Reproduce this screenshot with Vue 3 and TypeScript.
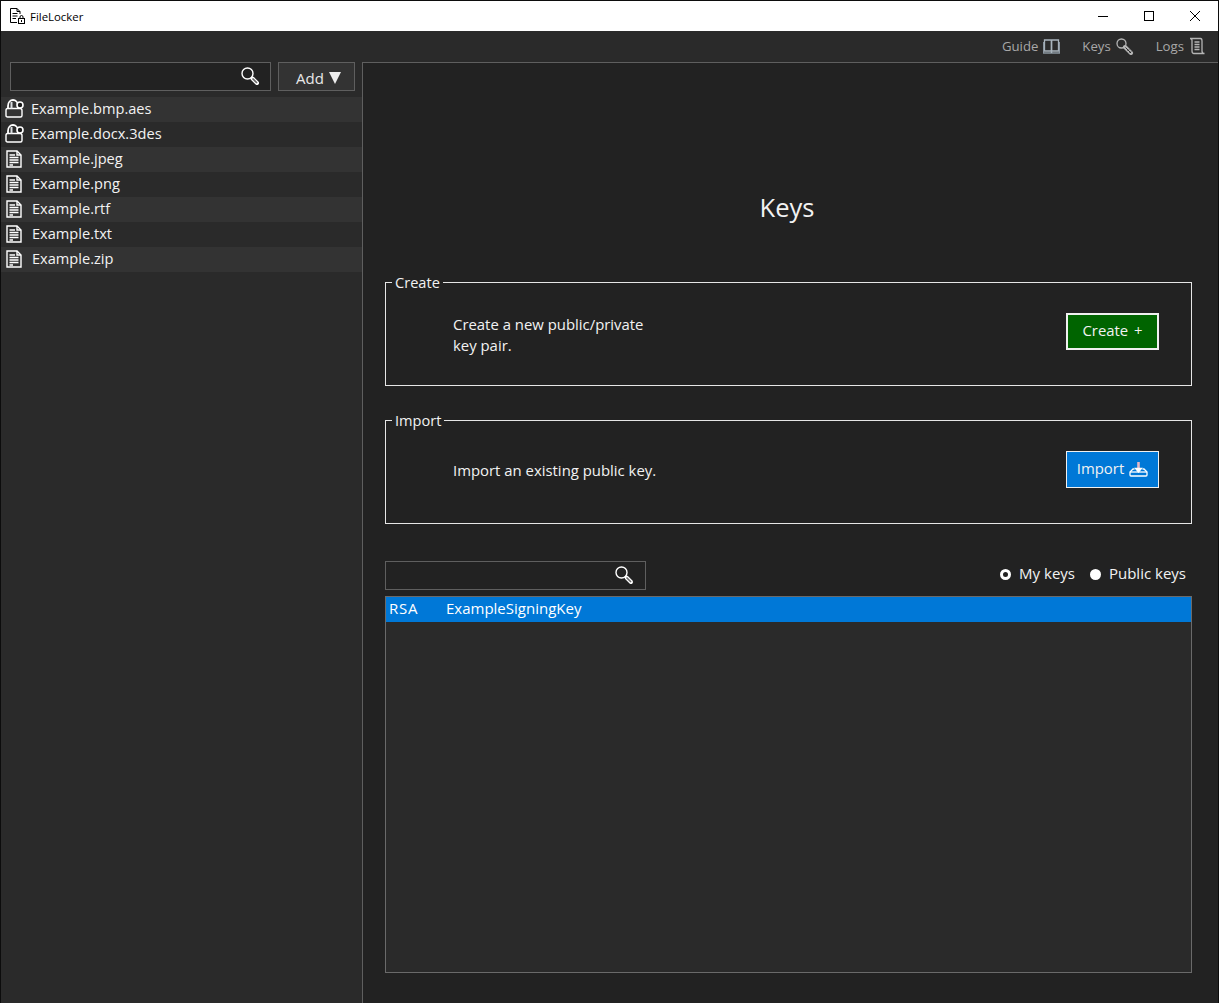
<script setup lang="ts">
interface FileRow { name: string; locked: boolean }
const files: FileRow[] = [
  { name: 'Example.bmp.aes', locked: true },
  { name: 'Example.docx.3des', locked: true },
  { name: 'Example.jpeg', locked: false },
  { name: 'Example.png', locked: false },
  { name: 'Example.rtf', locked: false },
  { name: 'Example.txt', locked: false },
  { name: 'Example.zip', locked: false },
]
</script>

<template>
  <div class="window">
    <header class="titlebar">
      <svg class="app-icon" width="15" height="16" viewBox="0 0 15 16" fill="none" stroke="#000" stroke-width="1">
        <path d="M7 14.5H.5V.5H7L10 3.5V6" />
        <path d="M7 .5V3.5H10M2.5 5.5H7.5M2.5 8H7.5M2.5 10.5H6" />
        <rect x="8.5" y="10.5" width="6" height="5" />
        <path d="M10 10.5V9a1.5 1.5 0 0 1 3 0V10.5" />
        <rect x="11" y="12" width="1" height="2" fill="#000" stroke="none" />
      </svg>
      <span class="app-name">FileLocker</span>
      <div class="controls">
        <span class="ctl"><svg width="12" height="12" viewBox="0 0 12 12"><path d="M1 6.5H11" stroke="#000" /></svg></span>
        <span class="ctl"><svg width="12" height="12" viewBox="0 0 12 12"><rect x="1.5" y="1.5" width="9" height="9" fill="none" stroke="#000" /></svg></span>
        <span class="ctl"><svg width="12" height="12" viewBox="0 0 12 12"><path d="M1 1L11 11M11 1L1 11" stroke="#000" /></svg></span>
      </div>
    </header>

    <nav class="topnav">
      <span class="nav-item">Guide
        <svg width="17" height="15" viewBox="0 0 17 15" fill="none" stroke="#a9b4bd" stroke-width="1.3">
          <path d="M1.5 1H8.5V12H1.5ZM8.5 1H15.5V12H8.5Z" />
          <path d="M.5 3V14H16.5V3" stroke="#8b96a0" />
          <path d="M8.5 1V14" stroke-width="1.5" />
        </svg>
      </span>
      <span class="nav-item">Keys
        <svg width="18" height="17" viewBox="0 0 18 17" fill="none" stroke="#b5b5b5" stroke-width="1.3">
          <circle cx="5.5" cy="5.5" r="4.5" />
          <path d="M9 9L15 15" stroke-width="4" stroke-linecap="round" />
          <path d="M9.5 9.5L15 15" stroke="#2a2a2a" stroke-width="1" />
          <path d="M11.5 13L13 11.5M13.5 15L15 13.5" stroke="#2a2a2a" stroke-width="1" />
        </svg>
      </span>
      <span class="nav-item">Logs
        <svg width="16" height="18" viewBox="0 0 16 18" fill="none" stroke="#b5b5b5" stroke-width="1.3">
          <path d="M1 1.5H11.5C13 1.5 13 3 13 4V14C13 15.5 14 16.5 15.5 16.5H5C3.5 16.5 3 15.5 3 14V3.5C3 2.5 2.5 1.5 1 1.5Z" />
          <path d="M5.5 5H10.5M5.5 7.5H10.5M5.5 10H10.5M5.5 12.5H10.5" stroke-width="1.5" />
        </svg>
      </span>
    </nav>

    <div class="body">
      <aside class="sidebar">
        <div class="side-tools">
          <div class="search side-search">
            <svg class="glass" width="20" height="20" viewBox="0 0 20 20" fill="none">
              <circle cx="7.5" cy="7.5" r="5.5" stroke="#fff" stroke-width="1.4" />
              <path d="M12.5 12.5L17 17" stroke="#fff" stroke-width="4" stroke-linecap="round" />
              <path d="M12.5 12.5L17 17" stroke="#666" stroke-width="1.6" />
            </svg>
          </div>
          <div class="add-btn"><span>Add</span><span class="tri"></span></div>
        </div>
        <ul class="files">
          <li v-for="f in files" :key="f.name" class="file" :class="{ 'is-locked': f.locked }">
            <svg v-if="f.locked" class="file-icon" width="19" height="19" viewBox="0 0 19 19" fill="none" stroke="#fff" stroke-width="1.4">
              <path d="M3 9.5V7C3 3 5.5 1 8 1S13 3 13 7V9.5" stroke-width="1.8" />
              <path d="M2.5 9.5H15C16 9.5 17 10.5 17 11.5V16.5C17 17.5 16.5 18 15.5 18H2.5C1.5 18 1 17.5 1 16.5V11.5C1 10.5 1.5 9.5 2.5 9.5Z" />
              <path d="M6.5 3V9.5" stroke="#d9dde0" stroke-width="2" />
              <circle cx="15" cy="6" r="3" fill="#1a1a1a" stroke-width="1.6" />
            </svg>
            <svg v-else class="file-icon" width="16" height="18" viewBox="0 0 16 18" fill="none" stroke="#fff" stroke-width="1.4">
              <path d="M1 1H11L15 5V17H1Z" />
              <path d="M11 1V5H15" />
              <path d="M3.5 5H9M3.5 7.5H12.5M3.5 10H12.5M3.5 12.5H12.5M3.5 15H7" stroke-width="1.7" />
            </svg>
            <span class="file-name">{{ f.name }}</span>
          </li>
        </ul>
      </aside>

      <main class="main">
        <h1 class="title">Keys</h1>

        <fieldset class="group">
          <legend>Create</legend>
          <div class="group-body">
            <p class="group-text two-line">Create a new public/private<br />key pair.</p>
            <div class="action create">Create +</div>
          </div>
        </fieldset>

        <fieldset class="group">
          <legend>Import</legend>
          <div class="group-body">
            <p class="group-text one-line">Import an existing public key.</p>
            <div class="action import">Import
              <svg width="19" height="16" viewBox="0 0 19 16" fill="none" stroke="#fff" stroke-width="1.3">
                <path d="M5.5 8H4L1 11V14C1 14.6 1.4 15 2 15H17C17.6 15 18 14.6 18 14V11L15 8H13.5" />
                <path d="M1 11H18" />
                <path d="M9.5 1V8" stroke="#e8b7c4" stroke-width="2.6" />
                <path d="M6.5 7.5H12.5L9.5 11Z" fill="#fff" />
              </svg>
            </div>
          </div>
        </fieldset>

        <div class="filter-row">
          <div class="search key-search">
            <svg class="glass" width="20" height="20" viewBox="0 0 20 20" fill="none">
              <circle cx="7.5" cy="7.5" r="5.5" stroke="#fff" stroke-width="1.4" />
              <path d="M12.5 12.5L17 17" stroke="#fff" stroke-width="4" stroke-linecap="round" />
              <path d="M12.5 12.5L17 17" stroke="#666" stroke-width="1.6" />
            </svg>
          </div>
          <div class="radios">
            <span class="radio"><i class="dot on"></i><span class="radio-label">My keys</span></span>
            <span class="radio"><i class="dot"></i><span class="radio-label">Public keys</span></span>
          </div>
        </div>

        <div class="keylist">
          <div class="key-row"><span class="key-type">RSA</span><span>ExampleSigningKey</span></div>
        </div>
      </main>
    </div>
  </div>
</template>

<style>
html, body { margin: 0; background: #222; }
</style>

<style scoped>
.window {
  width: 1219px;
  height: 1003px;
  box-sizing: border-box;
  border: 1px solid #0c0c0c;
  border-bottom: 0;
  display: flex;
  flex-direction: column;
  font-family: "Open Sans", "Noto Sans", sans-serif;
  font-size: 15px;
  color: #f2f2f2;
  background: #222;
  overflow: hidden;
}
.titlebar {
  height: 30px;
  flex: none;
  background: #fff;
  color: #000;
  display: flex;
  align-items: center;
  padding-left: 9px;
}
.app-name { margin-left: 5px; font-size: 11.4px; }
.controls { margin-left: auto; display: flex; }
.ctl { width: 46px; height: 30px; display: flex; align-items: center; justify-content: center; }
.topnav {
  height: 31px;
  flex: none;
  box-sizing: border-box;
  background: #2a2a2a;
  display: flex;
  justify-content: flex-end;
  align-items: center;
  gap: 22px;
  padding: 0 13px 1px 0;
  color: #a8a8a8;
  font-size: 13.2px;
}
.nav-item { display: flex; align-items: center; gap: 5px; }
.body { flex: 1; display: flex; min-height: 0; }
.sidebar {
  width: 361px;
  flex: none;
  background: #2a2a2a;
}
.side-tools { display: flex; gap: 7px; padding: 0 0 0 9px; }
.search {
  box-sizing: border-box;
  height: 29px;
  background: #222;
  border: 1px solid #5f5f5f;
  position: relative;
}
.side-search { width: 261px; }
.glass { position: absolute; right: 10px; top: 3px; }
.key-search .glass { right: 11px; }
.add-btn {
  box-sizing: border-box;
  width: 77px;
  height: 29px;
  background: #333;
  border: 1px solid #5f5f5f;
  display: flex;
  align-items: center;
  justify-content: center;
  gap: 5px;
  padding: 2px 0 0 4px;
  font-size: 15px;
  color: #e8e8e8;
}
.tri {
  width: 0;
  height: 0;
  border-left: 6.5px solid transparent;
  border-right: 6.5px solid transparent;
  border-top: 12px solid #eee;
}
.files { list-style: none; margin: 6px 0 0; padding: 0; }
.file {
  height: 25px;
  display: flex;
  align-items: center;
  padding-left: 5px;
  gap: 10px;
}
.file:nth-child(odd) { background: #333; }
.file.is-locked { padding-left: 4px; gap: 7px; }
.file-icon { margin-bottom: 2px; }
.file-name { font-size: 14.6px; margin-bottom: 3px; }
.main {
  flex: 1;
  background: #222;
  border-left: 1px solid #5f5f5f;
  border-top: 1px solid #5f5f5f;
  box-sizing: border-box;
  padding: 0 26px 30px 22px;
  display: flex;
  flex-direction: column;
  min-width: 0;
}
.title {
  margin: 127px 0 0;
  height: 82px;
  padding-right: 3px;
  font-size: 25.5px;
  font-weight: 400;
  text-align: center;
  line-height: 34px;
}
.group {
  margin: 0 0 24px;
  padding: 0;
  height: 114px;
  box-sizing: border-box;
  border: 1px solid #e6e6e6;
  min-width: 0;
}
.group legend {
  margin-left: 6px;
  padding: 0 3px;
  font-size: 14.6px;
  line-height: 20px;
}
.group-body {
  height: 78px;
  display: flex;
  align-items: center;
  justify-content: space-between;
}
.group-text { margin: 0 0 0 67px; font-size: 14.9px; line-height: 21px; }
.two-line { margin-top: 8px; }
.one-line { margin-top: 3px; }
.action {
  box-sizing: border-box;
  width: 93px;
  height: 37px;
  margin-right: 32px;
  display: flex;
  align-items: center;
  justify-content: center;
  gap: 5px;
  font-size: 14.9px;
  padding-bottom: 2px;
}
.create { background: #006400; border: 2px solid #f0f0f0; word-spacing: 2px; }
.import { background: #0078d7; border: 1px solid #f0f0f0; }
.import svg { margin-top: 2px; }
.filter-row { display: flex; justify-content: space-between; align-items: center; height: 29px; margin-top: 13px; }
.key-search { width: 261px; }
.radios { display: flex; gap: 15px; padding-right: 6px; }
.radio { display: flex; align-items: center; gap: 8px; }
.radio-label { margin-bottom: 3px; margin-top: -3px; }
.dot { width: 11px; height: 11px; border-radius: 50%; background: #fff; box-sizing: border-box; margin-bottom: 2px; }
.dot.on { background: #222; border: 3px solid #fff; }
.keylist {
  margin-top: 6px;
  flex: 1;
  background: #2a2a2a;
  border: 1px solid #6a6a6a;
  box-sizing: border-box;
}
.key-row {
  height: 25px;
  background: #0078d7;
  display: flex;
  align-items: center;
  padding: 0 0 3px 3px;
  box-sizing: border-box;
  color: #fff;
}
.key-type { width: 57px; letter-spacing: 0.8px; }
</style>
